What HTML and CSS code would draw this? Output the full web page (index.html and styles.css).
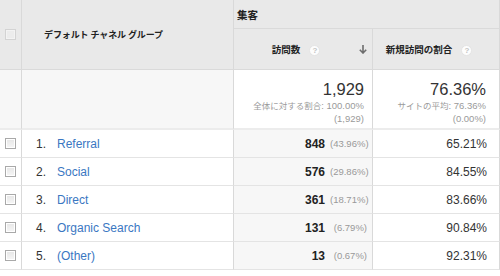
FILE: index.html
```html
<!DOCTYPE html>
<html lang="ja">
<head>
<meta charset="utf-8">
<link rel="stylesheet" href="styles.css">
</head>
<body>
<div class="report">
  <div class="cell head cb-col span2"><span class="checkbox disabled"></span></div>
  <div class="cell head name-head span2">デフォルト チャネル グループ</div>
  <div class="cell head group-head">集客</div>
  <div class="cell head metric-head">
    <span class="label">訪問数 <span class="help">?</span></span>
    <span class="sort"><svg width="8" height="9" viewBox="0 0 8 9"><path d="M4 0V8M0.8 4.8L4 8L7.2 4.8" fill="none" stroke="#6d6d6d" stroke-width="1.6"/></svg></span>
  </div>
  <div class="cell head metric-head last">
    <span class="label">新規訪問の割合 <span class="help">?</span></span>
    <span class="sort"></span>
  </div>

  <div class="cell sum cb-col"></div>
  <div class="cell sum"></div>
  <div class="cell sum total">
    <div class="big">1,929</div>
    <div class="sub"><span class="jp">全体に対する割合</span>: 100.00%</div>
    <div class="sub">(1,929)</div>
  </div>
  <div class="cell sum total last">
    <div class="big">76.36%</div>
    <div class="sub"><span class="jp">サイトの平均</span>: 76.36%</div>
    <div class="sub">(0.00%)</div>
  </div>

  <div class="cell row cb-col"><span class="checkbox"></span></div>
  <div class="cell row name"><span class="num">1.</span><a href="#">Referral</a></div>
  <div class="cell row visits"><b>848</b><span class="pct">(43.96%)</span></div>
  <div class="cell row rate last">65.21%</div>

  <div class="cell row cb-col"><span class="checkbox"></span></div>
  <div class="cell row name"><span class="num">2.</span><a href="#">Social</a></div>
  <div class="cell row visits"><b>576</b><span class="pct">(29.86%)</span></div>
  <div class="cell row rate last">84.55%</div>

  <div class="cell row cb-col"><span class="checkbox"></span></div>
  <div class="cell row name"><span class="num">3.</span><a href="#">Direct</a></div>
  <div class="cell row visits"><b>361</b><span class="pct">(18.71%)</span></div>
  <div class="cell row rate last">83.66%</div>

  <div class="cell row cb-col"><span class="checkbox"></span></div>
  <div class="cell row name"><span class="num">4.</span><a href="#">Organic Search</a></div>
  <div class="cell row visits"><b>131</b><span class="pct">(6.79%)</span></div>
  <div class="cell row rate last">90.84%</div>

  <div class="cell row cb-col"><span class="checkbox"></span></div>
  <div class="cell row name"><span class="num">5.</span><a href="#">(Other)</a></div>
  <div class="cell row visits"><b>13</b><span class="pct">(0.67%)</span></div>
  <div class="cell row rate last">92.31%</div>
</div>
</body>
</html>
```

FILE: styles.css
```css
* { box-sizing: border-box; }
body {
  margin: 0;
  background: #fff;
  font-family: "Liberation Sans", Arial, "Noto Sans CJK JP", sans-serif;
  color: #222;
}
.report {
  display: grid;
  grid-template-columns: 22px 212px 139px 127px;
  grid-template-rows: 29px 41px 60px repeat(5, 28px);
  width: 500px;
}
.cell {
  border-right: 1px solid #d9d9d9;
  min-width: 0;
}
.head {
  background: #e9e9e9;
  font-family: "Noto Sans CJK JP", sans-serif;
  font-weight: 700;
  font-size: 9.5px;
  color: #222;
  border-bottom: 1px solid #dadada;
}
.span2 { grid-row: 1 / 3; }
.cb-col {
  display: flex;
  align-items: center;
  justify-content: center;
}
.name-head {
  display: flex;
  align-items: center;
  padding-left: 22px;
  font-size: 9px;
  letter-spacing: -0.1px;
}
.group-head {
  grid-column: 3 / 5;
  display: flex;
  align-items: center;
  padding-left: 3px;
  font-size: 10.5px;
}
.metric-head {
  display: flex;
  align-items: center;
  padding-right: 4px;
}
.metric-head .label {
  flex: 1;
  text-align: center;
  white-space: nowrap;
}
.sort {
  width: 10px;
  display: flex;
  justify-content: center;
  padding-top: 1px;
}
.help {
  display: inline-block;
  width: 11px;
  height: 11px;
  margin-left: 7px;
  border-radius: 50%;
  background: #fdfdfd;
  border: 1px solid #e4e4e4;
  color: #c4c4c4;
  font-family: "Liberation Sans", sans-serif;
  font-size: 8px;
  line-height: 9px;
  text-align: center;
  vertical-align: 0;
}
.checkbox {
  display: block;
  width: 11px;
  height: 11px;
  border: 1px solid #a9a9a9;
  background: linear-gradient(#e6e6e6, #f6f6f6);
  box-shadow: inset 0 0 0 1px #fff;
}
.checkbox.disabled {
  border-color: #d3d3d3;
  background: #ececec;
  box-shadow: inset 0 0 0 1px #f3f3f3;
}
.sum {
  background: #f7f7f7;
  border-bottom: 2px solid #ececec;
}
.sum.total {
  background: #fff;
  text-align: right;
  padding: 10px 8px 0 0;
}
.sum.total.last { padding-right: 13px; }
.big {
  font-size: 16.5px;
  line-height: 19px;
  color: #333;
}
.sub {
  font-family: "Liberation Sans", "Noto Sans CJK JP", sans-serif;
  font-size: 9.5px;
  line-height: 12.5px;
  color: #9a9a9a;
}
.sub .jp {
  font-family: "Noto Sans CJK JP", sans-serif;
  font-size: 8.5px;
}
.row {
  border-bottom: 1px solid #e4e4e4;
  font-size: 12px;
  display: flex;
  align-items: center;
}
.name { padding-left: 14px; }
.num {
  width: 21px;
  color: #333;
}
.name a {
  color: #3a77c2;
  text-decoration: none;
}
.visits {
  background: #f7f7f7;
  justify-content: flex-end;
  padding-right: 5px;
}
.visits b {
  color: #222;
  font-weight: 700;
}
.pct {
  width: 42px;
  padding-left: 5px;
  text-align: right;
  font-size: 9.5px;
  color: #999;
  white-space: nowrap;
}
.rate {
  justify-content: flex-end;
  padding-right: 12px;
  color: #333;
}
```
